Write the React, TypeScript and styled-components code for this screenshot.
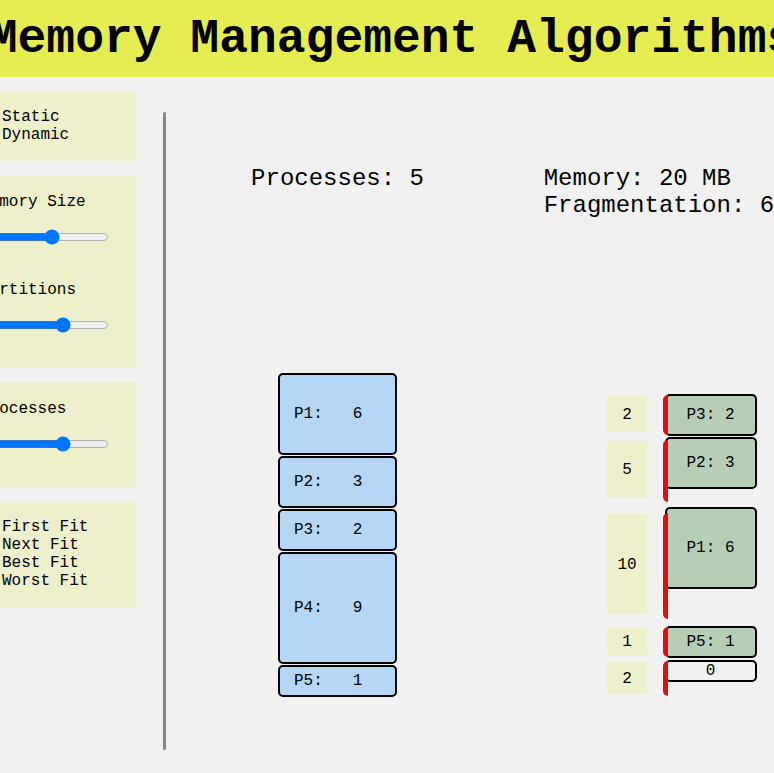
import React, { useState } from "react";
import styled, { createGlobalStyle } from "styled-components";

const GlobalStyle = createGlobalStyle`
  * { box-sizing: border-box; }
  body {
    margin: 0;
    overflow: hidden;
    background: #f1f1f1;
    color: #000;
    font: 16px/18px "Courier New", "Liberation Mono", monospace;
  }
`;

const Page = styled.div`
  width: calc(100% + 148px);
  margin-left: -70px;
`;

const Header = styled.header`
  display: flex;
  justify-content: center;
  padding: 12px 0 11px 2px;
  background: #e6ed52;
`;

const Title = styled.h1`
  margin: 0;
  font-size: 48px;
  line-height: 54px;
  font-weight: bold;
  white-space: nowrap;
`;

const Workspace = styled.main`
  display: flex;
  min-height: calc(100vh - 77px);
`;

const Sidebar = styled.aside`
  display: flex;
  flex-direction: column;
  gap: 14px;
  flex: none;
  width: 206px;
  padding: 14px 0 0 14px;
`;

const Panel = styled.section`
  display: flex;
  flex-direction: column;
  gap: 17px;
  padding: 17px 28px 17px 36px;
  background: #eef0cb;
`;

const Options = styled.div`
  display: flex;
  flex-direction: column;
`;

const Option = styled.label`
  display: flex;
  align-items: center;
  height: 18px;
  white-space: nowrap;
`;

const Radio = styled.input`
  width: 13px;
  height: 13px;
  margin: 0 9px 0 0;
`;

const SliderField = styled.label`
  display: flex;
  flex-direction: column;
  align-items: flex-start;
  gap: 18px;
  padding: 1px 0 18px;
`;

const Slider = styled.input`
  width: 129px;
  height: 16px;
  margin: 0;
`;

const Divider = styled.div`
  flex: none;
  width: 3px;
  margin: 35px 0 23px 27px;
  border-radius: 2px;
  background: #868686;
`;

const Columns = styled.div`
  display: grid;
  grid-template-columns: 1fr 1fr;
  flex: 1;
`;

const Column = styled.section`
  display: flex;
  flex-direction: column;
  align-items: center;
  padding-top: 88px;
`;

const Stats = styled.div`
  min-height: 54px;
  font-size: 24px;
  line-height: 27px;
  white-space: nowrap;
`;

const Diagram = styled.div`
  display: flex;
  flex-direction: column;
  justify-content: flex-end;
  gap: 1px;
  min-height: 478px;
`;

const MemoryDiagram = styled(Diagram)`
  padding-left: 2px;
`;

const Block = styled.div<{ $size: number; $tone: string }>`
  display: flex;
  align-items: center;
  height: ${(p) => p.$size * 10 + 22}px;
  border: 2px solid #000;
  border-radius: 5px;
  background: ${(p) => p.$tone};
  white-space: pre;
`;

const ProcessBlock = styled(Block)`
  width: 119px;
  padding-left: 14px;
  gap: 30px;
`;

const AllocatedBlock = styled(Block)`
  justify-content: center;
  width: 92px;
  margin-left: -3px;
`;

const PartitionRow = styled.div<{ $height: number }>`
  display: flex;
  align-items: flex-start;
  height: ${(p) => p.$height}px;
`;

const Capacity = styled.div<{ $height: number; $inset: number }>`
  display: flex;
  align-items: center;
  justify-content: center;
  width: 40px;
  height: ${(p) => p.$height}px;
  margin: ${(p) => p.$inset + 1}px 16px 0 0;
  padding: 1px 0 0 1px;
  background: #eef0cb;
`;

const Extent = styled.div<{ $height: number; $inset: number }>`
  z-index: 1;
  width: 5px;
  height: ${(p) => p.$height}px;
  margin-top: ${(p) => p.$inset}px;
  border-radius: 5px 0 0 5px;
  background: #dc1010;
`;

const processes = [
  { name: "P1", size: 6 },
  { name: "P2", size: 3 },
  { name: "P3", size: 2 },
  { name: "P4", size: 9 },
  { name: "P5", size: 1 },
];

const partitions = [
  { capacity: 2, owner: "P3", used: 2, row: 42, label: 36, extent: 40, inset: 1 },
  { capacity: 5, owner: "P2", used: 3, row: 69, label: 57, extent: 62, inset: 3 },
  { capacity: 10, owner: "P1", used: 6, row: 118, label: 100, extent: 106, inset: 6 },
  { capacity: 1, owner: "P5", used: 1, row: 33, label: 27, extent: 30, inset: 1 },
  { capacity: 2, owner: "", used: 0, row: 37, label: 32, extent: 35, inset: 1 },
];

function RadioGroup({ name, options }: { name: string; options: string[] }) {
  const [selected, setSelected] = useState(options[0]);
  return (
    <Panel>
      <Options role="radiogroup" aria-label={name}>
        {options.map((option) => (
          <Option key={option}>
            <Radio
              type="radio"
              name={name}
              checked={selected === option}
              onChange={() => setSelected(option)}
            />
            {option}
          </Option>
        ))}
      </Options>
    </Panel>
  );
}

function RangeField({ label, initial }: { label: string; initial: number }) {
  const [value, setValue] = useState(initial);
  return (
    <SliderField>
      {label}
      <Slider
        type="range"
        min={0}
        max={100}
        value={value}
        onChange={(e) => setValue(Number(e.target.value))}
      />
    </SliderField>
  );
}

export default function App() {
  return (
    <Page>
      <GlobalStyle />
      <Header>
        <Title>Memory Management Algorithms</Title>
      </Header>
      <Workspace>
        <Sidebar>
          <RadioGroup name="Partitioning" options={["Static", "Dynamic"]} />
          <Panel>
            <RangeField label="Memory Size" initial={57} />
            <RangeField label="Partitions" initial={66} />
          </Panel>
          <Panel>
            <RangeField label="Processes" initial={66} />
          </Panel>
          <RadioGroup
            name="Algorithm"
            options={["First Fit", "Next Fit", "Best Fit", "Worst Fit"]}
          />
        </Sidebar>
        <Divider />
        <Columns>
          <Column>
            <Stats>Processes: 5</Stats>
            <Diagram>
              {processes.map((p) => (
                <ProcessBlock key={p.name} $size={p.size} $tone="#b5d6f5">
                  <span>{p.name}:</span>
                  <span>{p.size}</span>
                </ProcessBlock>
              ))}
            </Diagram>
          </Column>
          <Column>
            <Stats>
              <div>Memory: 20 MB</div>
              <div>Fragmentation: 6 MB</div>
            </Stats>
            <MemoryDiagram>
              {partitions.map((p, i) => (
                <PartitionRow key={i} $height={p.row}>
                  <Capacity $height={p.label} $inset={p.inset}>
                    {p.capacity}
                  </Capacity>
                  <Extent $height={p.extent} $inset={p.inset} />
                  <AllocatedBlock
                    $size={p.used}
                    $tone={p.owner ? "#b6cdb6" : "#f1f1f1"}
                  >
                    {p.owner ? `${p.owner}: ${p.used}` : p.used}
                  </AllocatedBlock>
                </PartitionRow>
              ))}
            </MemoryDiagram>
          </Column>
        </Columns>
      </Workspace>
    </Page>
  );
}
